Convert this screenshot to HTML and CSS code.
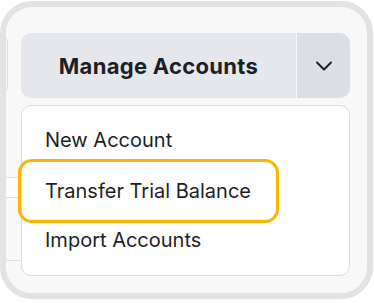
FILE: index.html
```html
<!DOCTYPE html>
<html lang="en">
<head>
    <meta charset="UTF-8">
    <meta name="viewport" content="width=device-width, initial-scale=1.0">
    <title>Manage Accounts</title>
    <link rel="stylesheet" href="styles.css">
</head>
<body>

    <div class="frame">
        <div class="side">
            <div class="input-stub"></div>
            <div class="rows">
                <div class="row row-light"></div>
                <div class="row"></div>
                <div class="row"></div>
            </div>
        </div>

        <div class="main">
            <div class="split-button">
                <button class="btn-label">Manage Accounts</button>
                <button class="btn-toggle" aria-label="Toggle menu">
                    <svg width="18" height="10" viewBox="0 0 18 10">
                        <path d="M2 1.5 L9 8.5 L16 1.5" fill="none" stroke="#1d1f24" stroke-width="2" stroke-linecap="round" stroke-linejoin="round"/>
                    </svg>
                </button>
            </div>

            <ul class="menu">
                <li class="menu-item">New Account</li>
                <li class="menu-item active">Transfer Trial Balance</li>
                <li class="menu-item">Import Accounts</li>
            </ul>
        </div>
    </div>

</body>
</html>
```

FILE: styles.css
```css
/* Split button with dropdown */
body { margin: 0; background-color: #ffffff; font-family: 'Inter', 'Noto Sans', sans-serif; color: #1d1f24; }
.frame { box-sizing: border-box; width: 373px; height: 298px; margin-top: 1px; border: 6px solid #e2e2e2; border-radius: 32px; background-color: #f8f8f8; overflow: hidden; display: flex; }

.side { width: 15px; flex: none; display: flex; flex-direction: column; }
.side > div { flex: none; }
.input-stub { box-sizing: border-box; width: 12px; height: 55px; margin: 30px 0 0 -10px; border: 1px solid #dcdcdf; border-radius: 5px; }
.rows { margin-top: 85px; display: flex; flex-direction: column; }
.row { flex: none; border-top: 1px solid #e0e0e3; height: 62px; }
.row-light { height: 19px; background-color: #fcfcfc; }

.main { width: 329px; flex: none; }
.split-button { display: flex; height: 65px; margin-top: 26px; border-radius: 10px; overflow: hidden; }
.split-button button { border: none; margin: 0; padding: 0; font-family: inherit; color: inherit; cursor: pointer; }
.btn-label { width: 275px; background-color: #e6e7ec; font-size: 22px; font-weight: 700; letter-spacing: 0.3px; }
.btn-toggle { flex: 1; margin-left: 1px !important; background-color: #dbdee5; display: flex; align-items: center; justify-content: center; }
.btn-toggle svg { margin-top: 1px; }

.menu { box-sizing: border-box; list-style: none; margin: 7px 0 0 0; padding: 22px 0 0 0; height: 171px; background-color: #ffffff; border: 1px solid #dadbe0; border-radius: 10px; }
.menu-item { font-size: 20px; line-height: 24px; padding-left: 23px; }
.menu-item.active { margin: 7px 70px 5px -4px; padding: 17px 0 17px 24px; border: 3px solid #fbb500; border-radius: 14px; }
```
